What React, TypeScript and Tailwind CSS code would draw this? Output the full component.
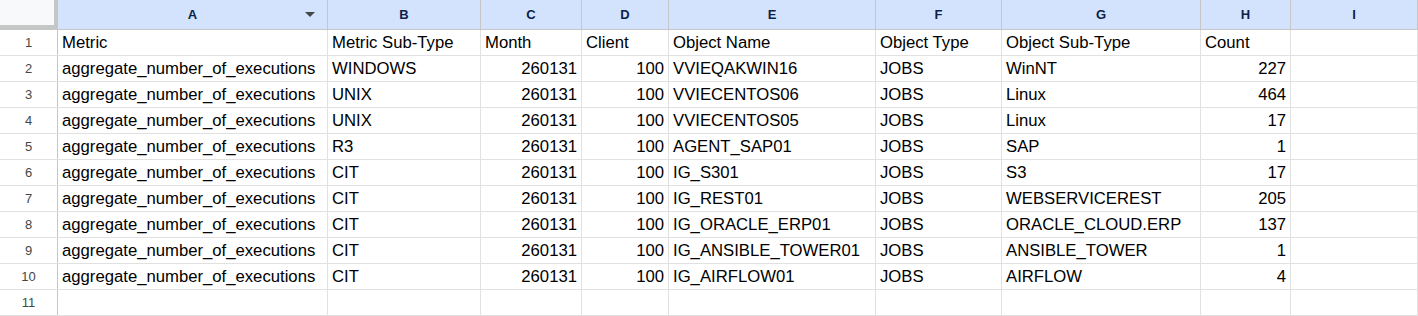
const COLS = [
  { key: "A", w: "w-[270px]" },
  { key: "B", w: "w-[153px]" },
  { key: "C", w: "w-[101px]" },
  { key: "D", w: "w-[87px]" },
  { key: "E", w: "w-[207px]" },
  { key: "F", w: "w-[126px]" },
  { key: "G", w: "w-[199px]" },
  { key: "H", w: "w-[90px]" },
  { key: "I", w: "flex-1" },
];

// true = numeric (right aligned)
const NUMERIC = [false, false, true, true, false, false, false, true, false];

const HEADER = ["Metric", "Metric Sub-Type", "Month", "Client", "Object Name", "Object Type", "Object Sub-Type", "Count", ""];

const ROWS: string[][] = [
  ["WINDOWS", "VVIEQAKWIN16", "WinNT", "227"],
  ["UNIX", "VVIECENTOS06", "Linux", "464"],
  ["UNIX", "VVIECENTOS05", "Linux", "17"],
  ["R3", "AGENT_SAP01", "SAP", "1"],
  ["CIT", "IG_S301", "S3", "17"],
  ["CIT", "IG_REST01", "WEBSERVICEREST", "205"],
  ["CIT", "IG_ORACLE_ERP01", "ORACLE_CLOUD.ERP", "137"],
  ["CIT", "IG_ANSIBLE_TOWER01", "ANSIBLE_TOWER", "1"],
  ["CIT", "IG_AIRFLOW01", "AIRFLOW", "4"],
].map(([sub, name, objSub, count]) => [
  "aggregate_number_of_executions",
  sub,
  "260131",
  "100",
  name,
  "JOBS",
  objSub,
  count,
  "",
]);

function Row({ n, cells }: { n: number; cells: string[] }) {
  return (
    <div className="flex h-[26px] border-b border-[#e1e1e1]">
      <div className="w-[58px] shrink-0 border-r border-[#c4c7c5] flex items-center justify-center text-[13px] text-[#444746]">
        {n}
      </div>
      {COLS.map((c, i) => (
        <div
          key={c.key}
          className={`${c.w} shrink-0 border-r border-[#e1e1e1] px-[4px] pt-[1px] flex items-center whitespace-nowrap overflow-hidden text-[16.7px] text-black ${
            NUMERIC[i] && n > 1 ? "justify-end" : ""
          }`}
        >
          {cells[i]}
        </div>
      ))}
    </div>
  );
}

export default function App() {
  return (
    <div className="w-[1418px] h-[316px] overflow-hidden bg-white font-['Liberation_Sans',Arial,sans-serif]">
      {/* column headers */}
      <div className="flex h-[30px] border-b border-[#c4c7c5]">
        <div className="w-[58px] shrink-0 bg-[#f8f9fa] border-r-4 border-b-4 border-[#c4c7c5]" />
        {COLS.map((c) => (
          <div
            key={c.key}
            className={`${c.w} shrink-0 relative bg-[#d3e3fd] border-r border-[#c4c7c5] flex items-center justify-center text-[13px] font-bold text-[#0b1f4a]`}
          >
            {c.key}
            {c.key === "A" && (
              <svg className="absolute right-[12px] top-[12px]" width="10" height="6" viewBox="0 0 10 6">
                <path d="M0 0 L10 0 L5 5 Z" fill="#444746" />
              </svg>
            )}
          </div>
        ))}
      </div>
      <Row n={1} cells={HEADER} />
      {ROWS.map((r, i) => (
        <Row key={i} n={i + 2} cells={r} />
      ))}
      <Row n={11} cells={["", "", "", "", "", "", "", "", ""]} />
    </div>
  );
}
